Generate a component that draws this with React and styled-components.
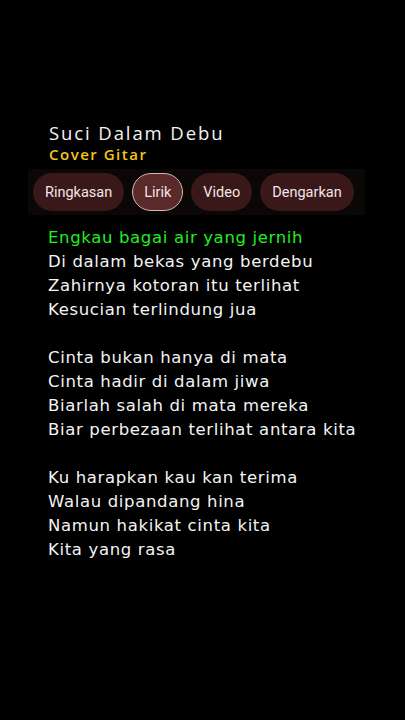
import React from 'react';
import styled, { createGlobalStyle } from 'styled-components';

const GlobalStyle = createGlobalStyle`
    html, body {
        margin: 0;
        padding: 0;
        background: #000;
    }
`;

const tabs = ['Ringkasan', 'Lirik', 'Video', 'Dengarkan'];

const stanzas = [
    [
        'Engkau bagai air yang jernih',
        'Di dalam bekas yang berdebu',
        'Zahirnya kotoran itu terlihat',
        'Kesucian terlindung jua',
    ],
    [
        'Cinta bukan hanya di mata',
        'Cinta hadir di dalam jiwa',
        'Biarlah salah di mata mereka',
        'Biar perbezaan terlihat antara kita',
    ],
    [
        'Ku harapkan kau kan terima',
        'Walau dipandang hina',
        'Namun hakikat cinta kita',
        'Kita yang rasa',
    ],
];

const App = () => {
    return (
        <Page>
            <GlobalStyle />
            <Header>
                <Title>Suci Dalam Debu</Title>
                <Subtitle>Cover Gitar</Subtitle>
            </Header>

            <TabBar>
                {tabs.map((t) => (
                    <Tab key={t} active={t === 'Lirik'}>{t}</Tab>
                ))}
            </TabBar>

            <Lyrics>
                {stanzas.map((lines, i) => (
                    <Stanza key={i}>
                        {lines.map((line, j) => (
                            <Line key={j} current={i === 0 && j === 0}>{line}</Line>
                        ))}
                    </Stanza>
                ))}
            </Lyrics>
        </Page>
    );
};

export default App;

const Page = styled.div`
    width: 405px;
    height: 720px;
    background: #000;
    padding-top: 121px;
    box-sizing: border-box;
    overflow: hidden;
`

const Header = styled.div`
    padding-left: 49px;
    display: flex;
    flex-direction: column;
`

const Title = styled.div`
    font-family: 'Open Sans', sans-serif;
    font-size: 18.5px;
    line-height: 23px;
    color: #f2f2f2;
    letter-spacing: 1.9px;
    font-weight: 500;
`

const Subtitle = styled.div`
    font-family: 'Open Sans', sans-serif;
    font-size: 15px;
    line-height: 20px;
    color: #f5c518;
    letter-spacing: 1.5px;
    font-weight: 600;
`

const TabBar = styled.div`
    margin: 5px 40px 0 28px;
    padding: 4px 5px;
    background: #0b0707;
    display: flex;
    gap: 8px;
`

const Tab = styled.div`
    height: 38px;
    padding: 0 ${p => p.active ? '11px' : '12px'};
    border-radius: 19px;
    box-sizing: border-box;
    display: flex;
    align-items: center;
    font-family: Roboto, sans-serif;
    font-size: 14.5px;
    color: #f0e6e6;
    background: ${p => p.active ? '#5a2a2b' : '#3a1719'};
    border: ${p => p.active ? '1px solid #d8b4b4' : 'none'};
`

const Lyrics = styled.div`
    padding: 11px 0 0 48px;
    display: flex;
    flex-direction: column;
    gap: 24px;
`

const Stanza = styled.div`
    display: flex;
    flex-direction: column;
`

const Line = styled.div`
    font-family: 'DejaVu Sans', sans-serif;
    font-size: 16.5px;
    line-height: 24px;
    letter-spacing: 0.65px;
    color: ${p => p.current ? '#22ee22' : '#f4f4f4'};
    white-space: nowrap;
`
